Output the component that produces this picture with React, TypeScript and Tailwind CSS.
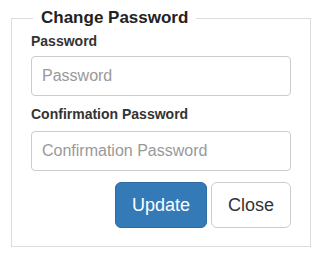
export default function App() {
  return (
    <div className="min-h-[265px] bg-white pl-[11px] pt-[8px] font-['Liberation_Sans',Arial,sans-serif] text-[#333]">
      <fieldset className="w-[300px] border border-[#ddd] px-[19px] pb-[18px]">
        <legend className="ml-[2px] px-2 text-[17px] font-bold leading-[20px] text-[#222]">
          Change Password
        </legend>
        <div className="flex flex-col">
          <label className="mt-[3px] mb-[5px] text-[14px] font-bold leading-[20px]">Password</label>
          <input
            type="password"
            placeholder="Password"
            className="h-[40px] w-full rounded border border-[#ccc] px-[10px] text-[16px] placeholder:text-[#999] outline-none"
          />
          <label className="mt-[8px] mb-[7px] text-[14px] font-bold leading-[20px]">
            Confirmation Password
          </label>
          <input
            type="password"
            placeholder="Confirmation Password"
            className="h-[40px] w-full rounded border border-[#ccc] px-[10px] text-[16px] placeholder:text-[#999] outline-none"
          />
          <div className="mt-[11px] flex justify-end gap-1">
            <button className="h-[46px] rounded-md border border-[#2e6da4] bg-[#337ab7] px-4 text-[18px] leading-[24px] text-white">
              Update
            </button>
            <button className="h-[46px] rounded-md border border-[#ccc] bg-white px-4 text-[18px] leading-[24px] text-[#333]">
              Close
            </button>
          </div>
        </div>
      </fieldset>
    </div>
  )
}
